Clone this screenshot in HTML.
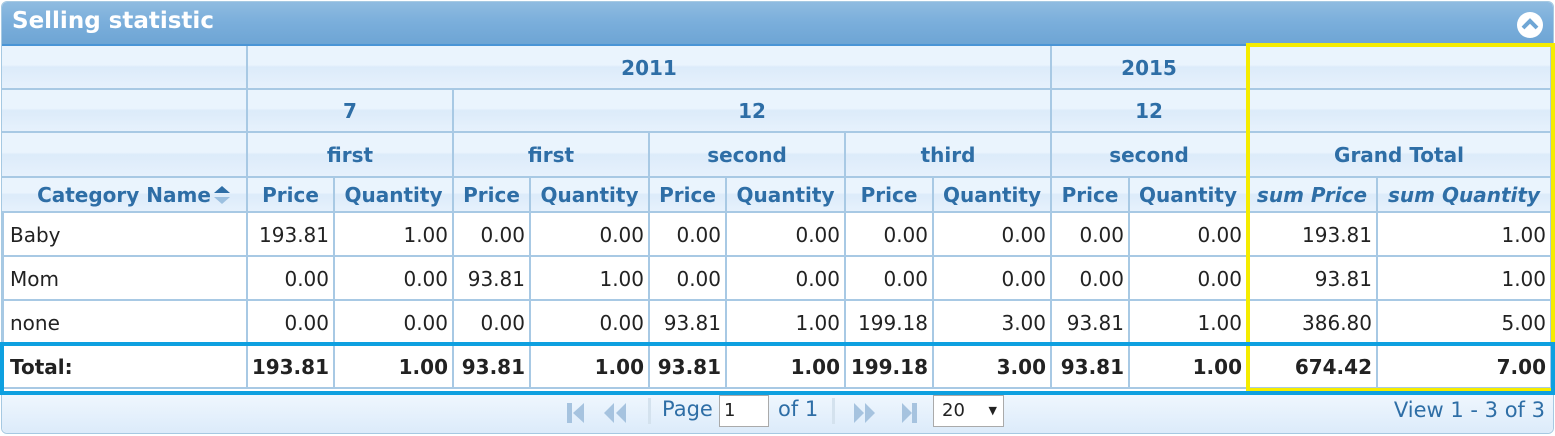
<!DOCTYPE html>
<html><head><meta charset="utf-8"><style>
*{margin:0;padding:0;box-sizing:border-box}
body{width:1555px;height:436px;background:#fff;font-family:"DejaVu Sans","Liberation Sans",sans-serif;position:relative;overflow:hidden}
.panel{position:absolute;left:1px;top:1px;width:1553px;height:433px;border:1px solid #a6c9e2;border-radius:6px;overflow:hidden;background:#fff}
.title{position:absolute;left:0;top:0;width:100%;height:44px;background:linear-gradient(#8fbbe0,#7aaedb 50%,#6ea5d4);border-bottom:2px solid #4a95d6}
.title span{position:absolute;left:10px;top:6px;color:#fff;font-weight:bold;font-size:23px}
.c{position:absolute;border-right:2px solid #a8c9e4;border-bottom:2px solid #a8c9e4;font-size:20px;white-space:nowrap;overflow:hidden}
.h{background:linear-gradient(#eaf4fd 0%,#eaf4fd 45%,#dcebfa 50%,#e6f1fc 100%);color:#2e6ea6;font-weight:bold;text-align:center}
.d{color:#222;text-align:right;padding-right:4px}
.t{font-weight:bold;color:#222}
.pager{position:absolute;left:0;top:392px;width:100%;height:42px;background:linear-gradient(#f0f7fe,#dcebfa)}
</style></head><body>
<div class="panel">
<div class="title"><span>Selling statistic</span>
<svg style="position:absolute;right:9px;top:9px" width="28" height="28" viewBox="0 0 28 28"><circle cx="14" cy="14" r="13" fill="#fff"/><path d="M7 17 L14 10 L21 17" stroke="#6fa6d5" stroke-width="4" fill="none" stroke-linejoin="miter"/></svg>
</div>
</div>
<div id="g"></div>
<div class="pager" style="left:2px;width:1551px;top:393px;height:40px;border-radius:0 0 6px 6px">
<svg style="position:absolute;left:562px;top:7px" width="70" height="26"><path d="M3 3h5v20H3z M20 3 L9 13 L20 23z" fill="#a6c3df"/><path d="M50 3 L40 13 L50 23z M62 3 L52 13 L62 23z" fill="#a6c3df"/></svg>
<div style="position:absolute;left:646px;top:5px;width:3px;height:26px;background:#d4e2ee"></div>
<span style="position:absolute;left:660px;top:4px;font-size:21px;color:#2e6ea6">Page</span>
<div style="position:absolute;left:717px;top:2px;width:50px;height:32px;background:#fff;border:1px solid #aaa;font-size:18px;padding:4px 4px;color:#222">1</div>
<span style="position:absolute;left:776px;top:4px;font-size:21px;color:#2e6ea6">of 1</span>
<div style="position:absolute;left:830px;top:5px;width:3px;height:26px;background:#d4e2ee"></div>
<svg style="position:absolute;left:850px;top:7px" width="70" height="26"><path d="M2 3 L12 13 L2 23z M13 3 L23 13 L13 23z" fill="#a6c3df"/><path d="M50 3 L60 13 L50 23z M60 3h5v20h-5z" fill="#a6c3df"/></svg>
<div style="position:absolute;left:931px;top:2px;width:71px;height:32px;background:#fff;border:1px solid #aaa;font-size:18px;padding:4px 8px;color:#222">20<span style="position:absolute;right:6px;top:8px;font-size:11px">▼</span></div>
<span style="position:absolute;right:8px;top:5px;font-size:21px;color:#2e6ea6">View 1 - 3 of 3</span>
</div>
<div style="position:absolute;left:1246px;top:43px;width:309px;height:349px;border:4px solid #f5ec00"></div>
<div style="position:absolute;left:0;top:342px;width:1555px;height:53px;border:4px solid #0ea0e0"></div>
<script>
var X=[2,248,335,454,531,650,727,846,934,1052,1130,1248,1378,1552];
var Y=[46,90,133,178,213,257,301,345,389];
var g=document.getElementById('g'),h='';
function cell(c1,c2,r1,r2,cls,txt,st){h+='<div class="c '+cls+'" style="left:'+X[c1]+'px;top:'+Y[r1]+'px;width:'+(X[c2]-X[c1])+'px;height:'+(Y[r2]-Y[r1])+'px;line-height:'+(Y[r2]-Y[r1])+'px;'+(st||'')+'">'+txt+'</div>';}
cell(0,1,0,1,'h','');cell(1,9,0,1,'h','2011');cell(9,11,0,1,'h','2015');cell(11,13,0,1,'h','');
cell(0,1,1,2,'h','');cell(1,3,1,2,'h','7');cell(3,9,1,2,'h','12');cell(9,11,1,2,'h','12');cell(11,13,1,2,'h','');
cell(0,1,2,3,'h','');cell(1,3,2,3,'h','first');cell(3,5,2,3,'h','first');cell(5,7,2,3,'h','second');cell(7,9,2,3,'h','third');cell(9,11,2,3,'h','second');cell(11,13,2,3,'h','Grand Total');
cell(0,1,3,4,'h','Category Name<svg width="18" height="22" style="vertical-align:-4px;margin-left:2px"><path d="M1 9 L9 2 L17 9z" fill="#2e6ea6"/><path d="M1 13 L9 20 L17 13z" fill="#9cc0e0"/></svg>','padding-left:20px');
for(var i=1;i<11;i++)cell(i,i+1,3,4,'h',i%2?'Price':'Quantity');
cell(11,12,3,4,'h','sum Price','font-style:italic');cell(12,13,3,4,'h','sum Quantity','font-style:italic');
var rows=[['Baby','193.81','1.00','0.00','0.00','0.00','0.00','0.00','0.00','0.00','0.00','193.81','1.00'],
['Mom','0.00','0.00','93.81','1.00','0.00','0.00','0.00','0.00','0.00','0.00','93.81','1.00'],
['none','0.00','0.00','0.00','0.00','93.81','1.00','199.18','3.00','93.81','1.00','386.80','5.00'],
['Total:','193.81','1.00','93.81','1.00','93.81','1.00','199.18','3.00','93.81','1.00','674.42','7.00']];
for(var r=0;r<4;r++)for(var c=0;c<13;c++){var t=r==3?' t':'';
 if(c==0)cell(0,1,4+r,5+r,'d'+t,rows[r][c],'text-align:left;padding-left:6px;border-left:2px solid #a8c9e4');
 else cell(c,c+1,4+r,5+r,'d'+t,rows[r][c]);}
g.innerHTML=h;
</script>
</body></html>
